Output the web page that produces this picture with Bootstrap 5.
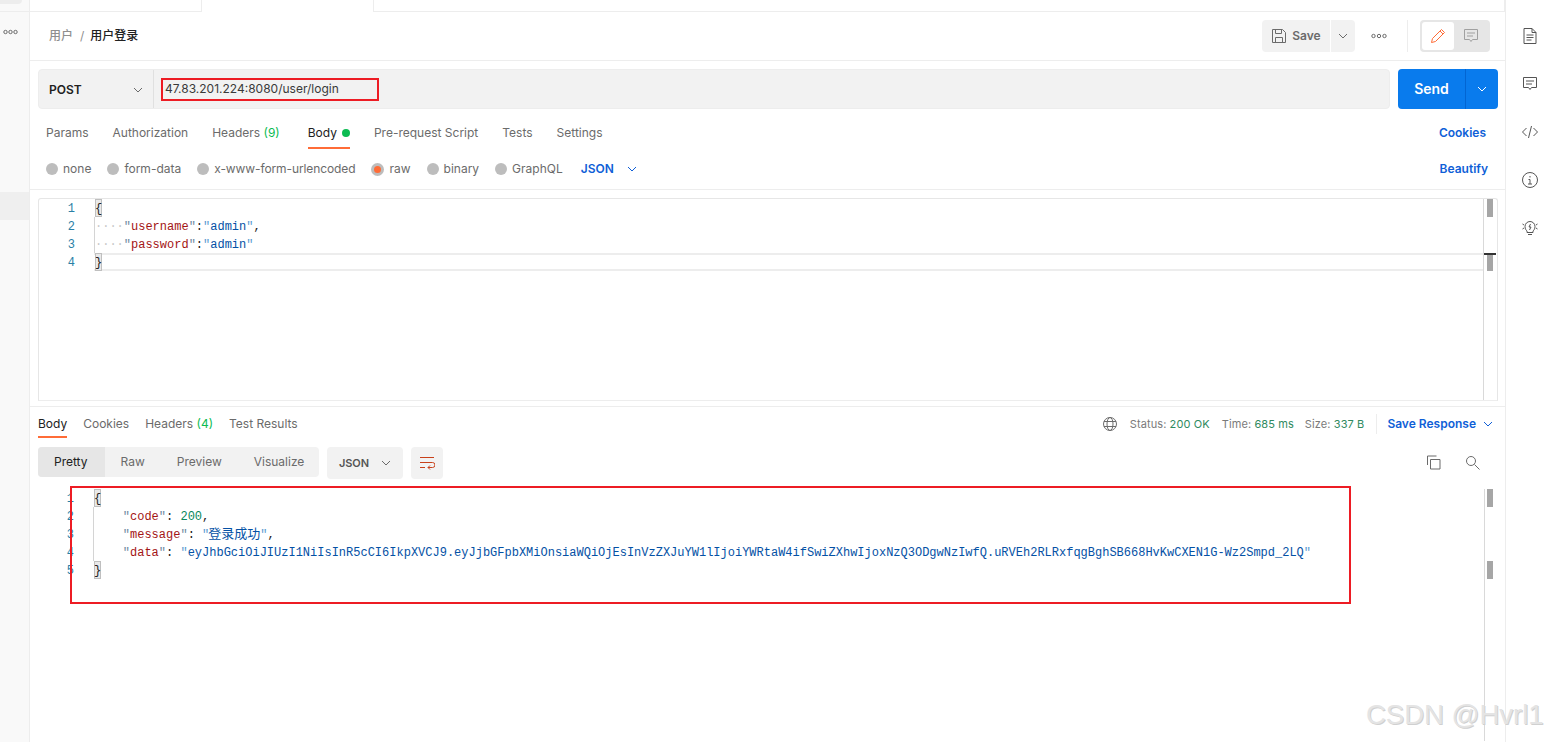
<!DOCTYPE html>
<html lang="zh">
<head>
<meta charset="utf-8">
<title>Postman</title>
<link href="https://cdn.jsdelivr.net/npm/bootstrap@5.3.0/dist/css/bootstrap.min.css" rel="stylesheet">
<style>
html,body{height:742px;overflow:hidden}
body{font-family:Inter,"Noto Sans CJK SC",sans-serif;font-size:12px;color:#6b6b6b;background:#fff;line-height:16px}
.shell{height:742px;position:relative}
.side-rail{width:30px;flex:none;background:#f9f9f9;border-right:1px solid #ededed;position:relative}
.rail-top{height:12px;border-bottom:1px solid #ededed}
.rail-pill{width:22px;height:4px;background:#ededed;border-radius:0 0 4px 0}
.rail-dots{height:40px;padding-left:3px}
.rail-hit{height:28px;margin-top:140px;background:#efefef}
.main-col{flex:1 1 auto;min-width:0}
.right-rail{width:44px;flex:none;border-left:1px solid #ededed;padding:28px 0 0 4px;gap:32px}
.right-rail svg{display:block}
.tabstrip{height:12px}
.tab-on{width:173px;flex:none;border-left:1px solid #ededed;border-right:1px solid #ededed}
.tab-lead{width:171px;flex:none;border-bottom:1px solid #ededed}
.tab-split{width:200px;flex:none;border-bottom:1px solid #ededed}
.tab-tail{flex:1;border-bottom:1px solid #ededed;border-right:1px solid #ededed}
.crumbbar{height:49px;border-bottom:1px solid #ededed;padding:0 15px 0 19px}
.crumb-a{color:#8f8f8f;font-weight:500}
.crumb-sep{color:#8f8f8f;margin:0 6px 0 7px}
.crumb-b{color:#212121;font-weight:500}
.tool-btn{height:32px;background:#f2f2f2;border:0;border-radius:4px;color:#6b6b6b;font-weight:600;font-size:12px;padding:0;display:flex;align-items:center;justify-content:center}
.save-main{width:68px;gap:5px;border-radius:4px 0 0 4px}
.save-caret{width:24px;margin-left:1px;border-radius:0 4px 4px 0}
.more-box{width:52px;padding-right:4px}
.vdiv{width:1px;height:32px;background:#ededed}
.mode-box{width:70px;height:32px;background:#e6e6e6;border-radius:4px;padding:2px;margin-left:12px}
.mode-on{width:32px;height:28px;background:#fff;border-radius:3px}
.mode-off{width:34px;height:28px}
.urlrow{height:40px;margin:8px 7px 0 8px;gap:8px}
.urlgroup{flex:1;min-width:0;background:#f2f2f2;border:1px solid #ededed;border-radius:4px;height:40px}
.method{width:115px;flex:none;border-right:1px solid #e0e0e0;padding:1px 10px 0;color:#212121;font-weight:600}
.urltext{padding-left:11px;color:#3a3a3a}
.sendgroup{width:100px;height:40px;background:#097bed;border-radius:4px;color:#fff;font-weight:600;font-size:14px}
.send-label{width:67px;text-align:center}
.send-caret{flex:1;border-left:1px solid #0265d2;height:40px}
.tabs-row{height:48px;padding:0 19px 0 16px}
.tab-item{height:48px;line-height:48px;margin-right:24px;color:#6b6b6b;white-space:nowrap;position:relative}
.tab-item.wide-gap{margin-right:28px}
.tab-item.on{color:#212121}
.tab-item.on::after{content:"";position:absolute;left:0;right:0;top:38px;height:2px;background:#ff6c37}
.gr{color:#0cbb52}
.dot-green{display:inline-block;width:8px;height:8px;border-radius:50%;background:#0cbb52;margin-left:5px;vertical-align:0}
.link-blue{color:#0f5fd7;font-weight:600}
.body-row{height:33px;padding:0 17px 8px 16px;border-bottom:1px solid #ededed}
.radio-opt{gap:5px;margin-right:16px;white-space:nowrap}
.radio-tight{letter-spacing:-.1px}
.radio-dot{width:12px;height:12px;border-radius:50%;background:#bdbdbd;display:inline-block;position:relative;flex:none}
.radio-dot.sel{width:13px;height:13px}
.radio-dot.sel::after{content:"";position:absolute;left:3px;top:3px;width:7px;height:7px;border-radius:50%;background:#ff6c37}
.json-pick{color:#0f5fd7;font-weight:600;gap:13px;margin-left:2px}
.editor{height:203px;margin:8px 7px 0 8px;border:1px solid #e6e6e6;border-bottom-color:#ededed;border-radius:3px 3px 0 0;position:relative}
.code{font-family:"Liberation Mono",monospace;font-size:12px;line-height:20px;color:#212121}
.code-line{height:18px;white-space:pre;position:relative}
.ln{display:inline-block;width:36px;text-align:right;color:#2a7fa6;margin-right:20px}
.cur::before{content:"";position:absolute;left:55px;right:14px;top:0;height:18px;border-top:2px solid #ededed;border-bottom:2px solid #ededed}
.ws{color:#c8c8c8}
.k{color:#a31515}
.kq{color:#6e8aa0}
.s{color:#0451a5}
.sq{color:#5a9bd1}
.n{color:#09885a}
.cjk{font-family:"Noto Sans CJK SC",sans-serif;font-size:13px;line-height:0;margin-left:-1px}
.brk{display:inline-block;height:18px;width:7px;background:#e9e9e9;box-shadow:inset 0 0 0 1px #bfbfbf;position:relative;vertical-align:top}
.guide{position:absolute;left:55px;width:1px;background:#d4d4d4}
.overview{position:absolute;top:0;right:0;bottom:0;width:14px;border-left:1px solid #d9d9d9}
.ov-mark{position:absolute;left:3px;width:6px;height:18px;background:#a6a6a6}
.ov-black{position:absolute;left:0;right:1px;height:2px;background:#333;z-index:1}
.resp{border-top:1px solid #ededed;margin-top:5px}
.resp-tabs{height:33px;padding:0 12px 0 8px;gap:16px}
.resp-tabs .tab-item{height:33px;line-height:33px;margin-right:0}
.resp-tabs .tab-item.on::after{top:29px}
.globe-ic{margin-right:13px}
.stat-gray{color:#7a7a7a;font-size:11px;letter-spacing:.1px}
.stat-val{color:#2f8a5f}
.stat-gap{margin-left:12px}
.stat-gap-s{margin-left:11px}
.stat-div{width:1px;height:20px;background:#ededed;margin:0 10px 0 12px}
.chev-gap{margin-left:7px}
.resp-tools{padding:7px 12px 0 8px;height:39px}
.seg{background:#f2f2f2;border-radius:4px;height:30px;width:281px}
.seg-item{line-height:30px;padding:0 16px;color:#6b6b6b;border-radius:4px}
.seg-item.on{background:#e6e6e6;color:#212121;border-radius:4px 0 0 4px;padding-right:17px}
.fmt{width:76px;margin-left:8px;gap:12px;font-size:11px;color:#555;letter-spacing:-.1px}
.wrapb{width:32px;margin-left:8px}
.resp-actions{gap:24px;padding:8px 13px 0 0}
.resp-code{position:relative;height:262px;padding-top:10px;margin-left:8px}
.resp-over{position:absolute;top:10px;bottom:0;right:13px;width:8px;border-left:1px solid #d9d9d9}
.resp-mark{position:absolute;left:2px;width:6px;height:18px;background:#a6a6a6}
.red-url{position:absolute;left:161px;top:78px;width:218px;height:23px;border:2px solid #ed1c24}
.red-resp{position:absolute;left:70px;top:486px;width:1281px;height:118px;border:2px solid #ed1c24}
.wm{position:absolute;left:1366px;top:699px;font-family:"Liberation Sans",sans-serif;font-size:27.5px;line-height:32px;color:#e4e4e4;text-shadow:1px 1px 0 #d0d0d0;white-space:nowrap}
</style>
</head>
<body>
<div class="shell d-flex">
  <aside class="side-rail">
    <div class="rail-top"><div class="rail-pill"></div></div>
    <div class="rail-dots d-flex align-items-center">
      <svg width="16" height="6" viewBox="0 0 16 6" fill="none" stroke="#6b6b6b"><circle cx="2.5" cy="3" r="1.7"/><circle cx="7.5" cy="3" r="1.7"/><circle cx="12.5" cy="3" r="1.7"/></svg>
    </div>
    <div class="rail-hit"></div>
  </aside>

  <main class="main-col d-flex flex-column">
    <div class="tabstrip d-flex">
      <div class="tab-lead"></div>
      <div class="tab-on"></div>
      <div class="tab-split"></div>
      <div class="tab-tail"></div>
    </div>

    <div class="crumbbar d-flex align-items-center justify-content-between">
      <div class="d-flex align-items-center"><span class="crumb-a">用户</span><span class="crumb-sep">/</span><span class="crumb-b">用户登录</span></div>
      <div class="d-flex align-items-center">
        <button class="tool-btn save-main" type="button">
          <svg width="16" height="16" viewBox="0 0 16 16" fill="none" stroke="#6b6b6b"><path d="M1.5 1.5h10l3 3v10h-13z"/><path d="M4.5 1.5v4h6v-4M4.5 14.5v-5h7v5"/></svg>
          <span>Save</span>
        </button>
        <button class="tool-btn save-caret" type="button"><svg width="10" height="6" viewBox="0 0 10 6" fill="none" stroke="#6b6b6b"><path d="M1 1l4 4 4-4"/></svg></button>
        <div class="more-box d-flex justify-content-center"><svg width="16" height="6" viewBox="0 0 16 6" fill="none" stroke="#6b6b6b"><circle cx="2.5" cy="3" r="1.7"/><circle cx="8" cy="3" r="1.7"/><circle cx="13.5" cy="3" r="1.7"/></svg></div>
        <div class="vdiv"></div>
        <div class="mode-box d-flex align-items-center">
          <div class="mode-on d-flex align-items-center justify-content-center"><svg width="16" height="16" viewBox="0 0 16 16" fill="none" stroke="#ff6c37"><path d="M1.5 14.5l1-4L11.5 1.5l3 3-9 9z"/><path d="M10 3l3 3"/></svg></div>
          <div class="mode-off d-flex align-items-center justify-content-center"><svg width="16" height="16" viewBox="0 0 16 16" fill="none" stroke="#a0a0a0"><path d="M1.5 1.5h13v10h-5l-1.500 2-1.500-2h-5z"/><path d="M4 5h8M4 8h6"/></svg></div>
        </div>
      </div>
    </div>

    <div class="urlrow d-flex">
      <div class="urlgroup d-flex align-items-center">
        <div class="method d-flex align-items-center justify-content-between h-100"><span>POST</span><svg width="10" height="6" viewBox="0 0 10 6" fill="none" stroke="#6b6b6b"><path d="M1 1l4 4 4-4"/></svg></div>
        <div class="urltext">47.83.201.224:8080/user/login</div>
      </div>
      <div class="sendgroup d-flex align-items-center">
        <div class="send-label">Send</div>
        <div class="send-caret d-flex align-items-center justify-content-center"><svg width="10" height="6" viewBox="0 0 10 6" fill="none" stroke="#fff"><path d="M1 1l4 4 4-4"/></svg></div>
      </div>
    </div>

    <div class="tabs-row d-flex align-items-center justify-content-between">
      <div class="d-flex">
        <div class="tab-item">Params</div>
        <div class="tab-item">Authorization</div>
        <div class="tab-item wide-gap">Headers <span class="gr">(9)</span></div>
        <div class="tab-item on">Body<span class="dot-green"></span></div>
        <div class="tab-item">Pre-request Script</div>
        <div class="tab-item">Tests</div>
        <div class="tab-item">Settings</div>
      </div>
      <span class="link-blue">Cookies</span>
    </div>

    <div class="body-row d-flex align-items-center justify-content-between">
      <div class="d-flex align-items-center">
        <div class="radio-opt d-flex align-items-center"><span class="radio-dot"></span>none</div>
        <div class="radio-opt d-flex align-items-center"><span class="radio-dot"></span>form-data</div>
        <div class="radio-opt radio-tight d-flex align-items-center"><span class="radio-dot"></span>x-www-form-urlencoded</div>
        <div class="radio-opt d-flex align-items-center"><span class="radio-dot sel"></span>raw</div>
        <div class="radio-opt d-flex align-items-center"><span class="radio-dot"></span>binary</div>
        <div class="radio-opt d-flex align-items-center"><span class="radio-dot"></span>GraphQL</div>
        <div class="json-pick d-flex align-items-center"><span>JSON</span><svg width="10" height="6" viewBox="0 0 10 6" fill="none" stroke="#0f5fd7"><path d="M1 1l4 4 4-4"/></svg></div>
      </div>
      <span class="link-blue">Beautify</span>
    </div>

    <div class="editor code">
      <div class="code-line"><span class="ln">1</span><span class="brk">{</span></div>
      <div class="code-line"><span class="ln">2</span><span class="ws">····</span><span class="kq">"</span><span class="k">username</span><span class="kq">"</span>:<span class="sq">"</span><span class="s">admin</span><span class="sq">"</span>,</div>
      <div class="code-line"><span class="ln">3</span><span class="ws">····</span><span class="kq">"</span><span class="k">password</span><span class="kq">"</span>:<span class="sq">"</span><span class="s">admin</span><span class="sq">"</span></div>
      <div class="code-line cur"><span class="ln">4</span><span class="brk">}</span></div>
      <div class="guide" style="top:18px;height:36px"></div>
      <div class="overview"><div class="ov-mark" style="top:0"></div><div class="ov-black" style="top:54px"></div><div class="ov-mark" style="top:54px"></div></div>
    </div>

    <section class="resp">
      <div class="resp-tabs d-flex align-items-center justify-content-between">
        <div class="d-flex gap-3">
          <div class="tab-item on">Body</div>
          <div class="tab-item">Cookies</div>
          <div class="tab-item">Headers <span class="gr">(4)</span></div>
          <div class="tab-item">Test Results</div>
        </div>
        <div class="d-flex align-items-center">
          <svg width="14" height="14" viewBox="0 0 14 14" fill="none" stroke="#6b6b6b" class="globe-ic"><circle cx="7" cy="7" r="6.500"/><ellipse cx="7" cy="7" rx="3" ry="6.500"/><path d="M1 4.500h12M1 9.500h12"/></svg>
          <span class="stat-gray">Status:&nbsp;<span class="stat-val">200 OK</span></span>
          <span class="stat-gray stat-gap">Time:&nbsp;<span class="stat-val">685 ms</span></span>
          <span class="stat-gray stat-gap-s">Size:&nbsp;<span class="stat-val">337 B</span></span>
          <span class="stat-div"></span>
          <span class="link-blue">Save Response</span>
          <svg width="10" height="6" viewBox="0 0 10 6" fill="none" stroke="#0f5fd7" class="chev-gap"><path d="M1 1l4 4 4-4"/></svg>
        </div>
      </div>
      <div class="resp-tools d-flex align-items-start justify-content-between">
        <div class="d-flex">
          <div class="seg d-flex"><div class="seg-item on">Pretty</div><div class="seg-item">Raw</div><div class="seg-item">Preview</div><div class="seg-item">Visualize</div></div>
          <button class="tool-btn fmt" type="button"><span>JSON</span><svg width="10" height="6" viewBox="0 0 10 6" fill="none" stroke="#6b6b6b"><path d="M1 1l4 4 4-4"/></svg></button>
          <button class="tool-btn wrapb" type="button"><svg width="16" height="14" viewBox="0 0 16 14" fill="none" stroke="#c8401a"><path d="M1 1.500h14M1 6.500h12.500a2 2 0 0 1 0 5H9"/><path d="M11 9.500l-2 2 2 2M1 11.500h5"/></svg></button>
        </div>
        <div class="resp-actions d-flex align-items-center">
          <svg width="15" height="15" viewBox="0 0 15 15" fill="none" stroke="#6b6b6b"><path d="M10.500 1H1.500v9"/><path d="M4.500 4.500h9.500v9.500H4.500z"/></svg>
          <svg width="15" height="15" viewBox="0 0 15 15" fill="none" stroke="#6b6b6b"><circle cx="6" cy="6" r="4.500"/><path d="M9.500 9.500l5 5"/></svg>
        </div>
      </div>
      <div class="resp-code code">
        <div class="code-line"><span class="ln">1</span><span class="brk">{</span></div>
        <div class="code-line"><span class="ln">2</span>    <span class="kq">"</span><span class="k">code</span><span class="kq">"</span>: <span class="n">200</span>,</div>
        <div class="code-line"><span class="ln">3</span>    <span class="kq">"</span><span class="k">message</span><span class="kq">"</span>: <span class="sq">"</span><span class="s cjk">登录成功</span><span class="sq">"</span>,</div>
        <div class="code-line"><span class="ln">4</span>    <span class="kq">"</span><span class="k">data</span><span class="kq">"</span>: <span class="sq">"</span><span class="s">eyJhbGciOiJIUzI1NiIsInR5cCI6IkpXVCJ9.eyJjbGFpbXMiOnsiaWQiOjEsInVzZXJuYW1lIjoiYWRtaW4ifSwiZXhwIjoxNzQ3ODgwNzIwfQ.uRVEh2RLRxfqgBghSB668HvKwCXEN1G-Wz2Smpd_2LQ</span><span class="sq">"</span></div>
        <div class="code-line"><span class="ln">5</span><span class="brk">}</span></div>
        <div class="guide" style="top:28px;height:54px"></div>
        <div class="resp-over"><div class="resp-mark" style="top:0"></div><div class="resp-mark" style="top:72px"></div></div>
      </div>
    </section>
  </main>

  <aside class="right-rail d-flex flex-column align-items-center">
    <svg width="14" height="16" viewBox="0 0 14 16" fill="none" stroke="#555"><path d="M1 .5h8l4 4v11H1z"/><path d="M9 .5v4h4M3.500 7h7M3.500 9.500h7M3.500 12h5"/></svg>
    <svg width="16" height="16" viewBox="0 0 16 16" fill="none" stroke="#555"><path d="M1.500 1.500h13v10h-5l-1.500 2-1.500-2h-5z"/><path d="M4 5h8M4 8h6"/></svg>
    <svg width="16" height="16" viewBox="0 0 16 16" fill="none" stroke="#555"><path d="M4.500 4l-4 4 4 4M11.500 4l4 4-4 4M9.500 2l-3 12"/></svg>
    <svg width="16" height="16" viewBox="0 0 16 16" fill="none" stroke="#555"><circle cx="8" cy="8" r="7.500"/><path d="M8 4v1.500M6.500 7.500H8v4.500M6 12h4"/></svg>
    <svg width="16" height="16" viewBox="0 0 16 16" fill="none" stroke="#555"><path d="M5 11c-1-1-2-2-2-4.500a5 5 0 0 1 10 0c0 2.500-1 3.500-2 4.500v1.500H5zM6 14.500h4M.5 4l1.500 1M.5 9l1.500-1M15.500 4L14 5M15.500 9L14 8"/><path d="M8.500 4L7 7h2l-1.500 3"/></svg>
  </aside>

  <div class="red-url"></div>
  <div class="red-resp"></div>
  <div class="wm">CSDN @Hvrl1</div>
</div>
<script src="https://cdn.jsdelivr.net/npm/bootstrap@5.3.0/dist/js/bootstrap.bundle.min.js"></script>
</body>
</html>
